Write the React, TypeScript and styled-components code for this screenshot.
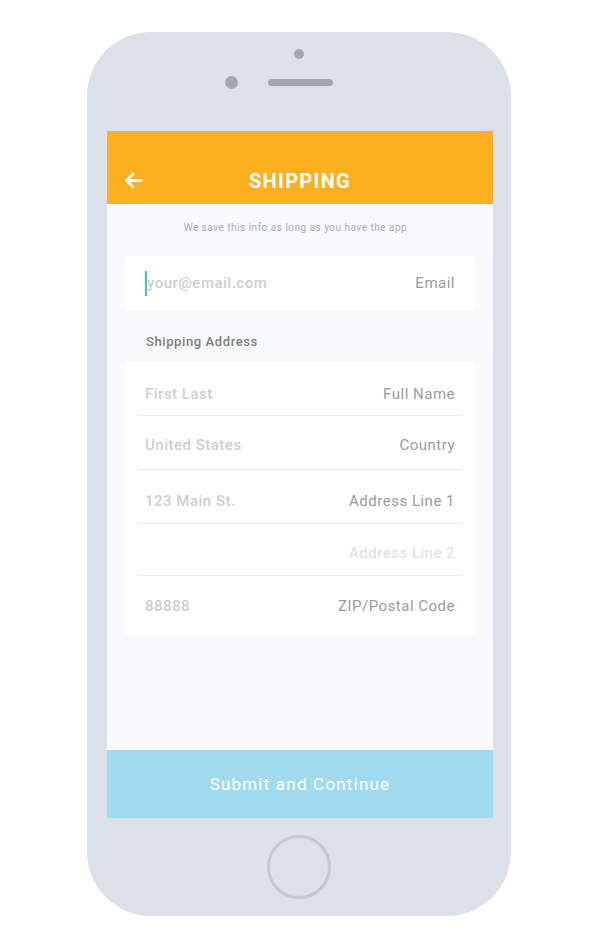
import styled, { createGlobalStyle } from 'styled-components';

const GlobalStyle = createGlobalStyle`
	html, body {
		margin: 0;
		padding: 0;
		background: #ffffff;
	}
	body {
		font-family: Roboto, "Liberation Sans", sans-serif;
	}
`;

const Page = styled.div`
	width: 600px;
	height: 949px;
	padding-top: 32px;
	box-sizing: border-box;
	display: flex;
	justify-content: center;
`;

const Phone = styled.div`
	width: 424px;
	height: 884px;
	margin-left: -2px;
	background: #dce0e8;
	border-radius: 64px;
	display: flex;
	flex-direction: column;
	padding: 0 18px 0 20px;
	box-sizing: border-box;
`;

const TopBezel = styled.div`
	height: 99px;
	display: flex;
	flex-direction: column;
	align-items: center;
	padding-top: 17px;
	box-sizing: border-box;
`;

const Sensor = styled.div`
	width: 10px;
	height: 10px;
	margin-left: -2px;
	border-radius: 50%;
	background: #a2a7b3;
`;

const EarRow = styled.div`
	margin-top: 17px;
	width: 100%;
	display: grid;
	grid-template-columns: 1fr 65px 1fr;
	align-items: center;
`;

const Camera = styled.div`
	justify-self: end;
	margin-right: 30px;
	width: 13px;
	height: 13px;
	border-radius: 50%;
	background: #a2a7b3;
`;

const Speaker = styled.div`
	height: 7px;
	border-radius: 4px;
	background: #a2a7b3;
`;

const Screen = styled.div`
	height: 687px;
	background: #f8f9fb;
	display: flex;
	flex-direction: column;
`;

const Header = styled.header`
	height: 73px;
	background: #fbb01f;
	padding-top: 26px;
	box-sizing: border-box;
	display: grid;
	grid-template-columns: 60px 1fr 60px;
	align-items: center;
`;

const BackButton = styled.div`
	display: flex;
	align-items: center;
	padding-left: 17px;
	height: 100%;
`;

const Title = styled.h1`
	margin: 0;
	text-align: center;
	color: #ffffff;
	font-size: 20px;
	font-weight: 700;
	letter-spacing: 1.3px;
	line-height: 24px;
`;

const Content = styled.div`
	flex: 1;
	padding: 17px 18px 0;
	display: flex;
	flex-direction: column;
`;

const Note = styled.p`
	margin: 0;
	padding-right: 9px;
	text-align: center;
	font-size: 10px;
	line-height: 14px;
	letter-spacing: 0.5px;
	color: #a9abb0;
`;

const Card = styled.div<{ $top: number }>`
	margin-top: ${(p) => p.$top}px;
	background: #ffffff;
	border-radius: 4px;
	padding: 0 13px;
`;

const SectionLabel = styled.div`
	margin-top: 24px;
	padding-left: 21px;
	font-size: 13px;
	line-height: 16px;
	font-weight: 500;
	letter-spacing: 0.6px;
	color: #7b7d82;
`;

const Row = styled.div<{ $height: number; $pad: number; $last?: boolean }>`
	height: ${(p) => p.$height}px;
	box-sizing: border-box;
	padding: ${(p) => p.$pad}px 7px 0;
	border-bottom: ${(p) => (p.$last ? 'none' : '1px solid #e9eaec')};
	display: flex;
	align-items: center;
	justify-content: space-between;
	font-size: 15px;
	letter-spacing: 0.5px;
`;

const Value = styled.span`
	display: flex;
	align-items: center;
	font-weight: 500;
	color: #cdced1;
`;

const Cursor = styled.span`
	width: 2px;
	height: 25px;
	background: #3bbde4;
`;

const FieldName = styled.span<{ $faint?: boolean }>`
	font-weight: 400;
	color: ${(p) => (p.$faint ? '#dcdde0' : '#999b9f')};
`;

const SubmitButton = styled.button`
	height: 68px;
	border: none;
	background: #a0daee;
	color: #ffffff;
	font-family: inherit;
	font-size: 17px;
	letter-spacing: 1.2px;
	cursor: pointer;
`;

const BottomBezel = styled.div`
	flex: 1;
	display: flex;
	align-items: center;
	justify-content: center;
`;

const HomeButton = styled.div`
	width: 64px;
	height: 64px;
	margin-left: -2px;
	box-sizing: border-box;
	border: 3px solid #c3c7d1;
	border-radius: 50%;
`;

const fields = [
	{ value: 'First Last', name: 'Full Name', height: 54, pad: 10 },
	{ value: 'United States', name: 'Country', height: 54, pad: 4 },
	{ value: '123 Main St.', name: 'Address Line 1', height: 54, pad: 8 },
	{ value: '', name: 'Address Line 2', faint: true, height: 52, pad: 6 },
	{ value: '88888', name: 'ZIP/Postal Code', height: 59, pad: 1 },
];

const BackArrow = () => (
	<svg width="19" height="17" viewBox="0 0 19 17" fill="none">
		<path
			d="M17.5 8.5H2.5M9 2L2.5 8.5L9 15"
			stroke="#ffffff"
			strokeWidth="2.8"
			strokeLinecap="round"
			strokeLinejoin="round"
		/>
	</svg>
);

const App = () => {
	return (
		<Page>
			<GlobalStyle />
			<Phone>
				<TopBezel>
					<Sensor />
					<EarRow>
						<Camera />
						<Speaker />
					</EarRow>
				</TopBezel>
				<Screen>
					<Header>
						<BackButton>
							<BackArrow />
						</BackButton>
						<Title>SHIPPING</Title>
					</Header>
					<Content>
						<Note>We save this info as long as you have the app</Note>
						<Card $top={21}>
							<Row $height={54} $pad={0} $last>
								<Value>
									<Cursor />
									your@email.com
								</Value>
								<FieldName>Email</FieldName>
							</Row>
						</Card>
						<SectionLabel>Shipping Address</SectionLabel>
						<Card $top={12}>
							{fields.map((f, i) => (
								<Row
									key={f.name}
									$height={f.height}
									$pad={f.pad}
									$last={i === fields.length - 1}
								>
									<Value>{f.value}</Value>
									<FieldName $faint={f.faint}>{f.name}</FieldName>
								</Row>
							))}
						</Card>
					</Content>
					<SubmitButton>Submit and Continue</SubmitButton>
				</Screen>
				<BottomBezel>
					<HomeButton />
				</BottomBezel>
			</Phone>
		</Page>
	);
};

export default App;
